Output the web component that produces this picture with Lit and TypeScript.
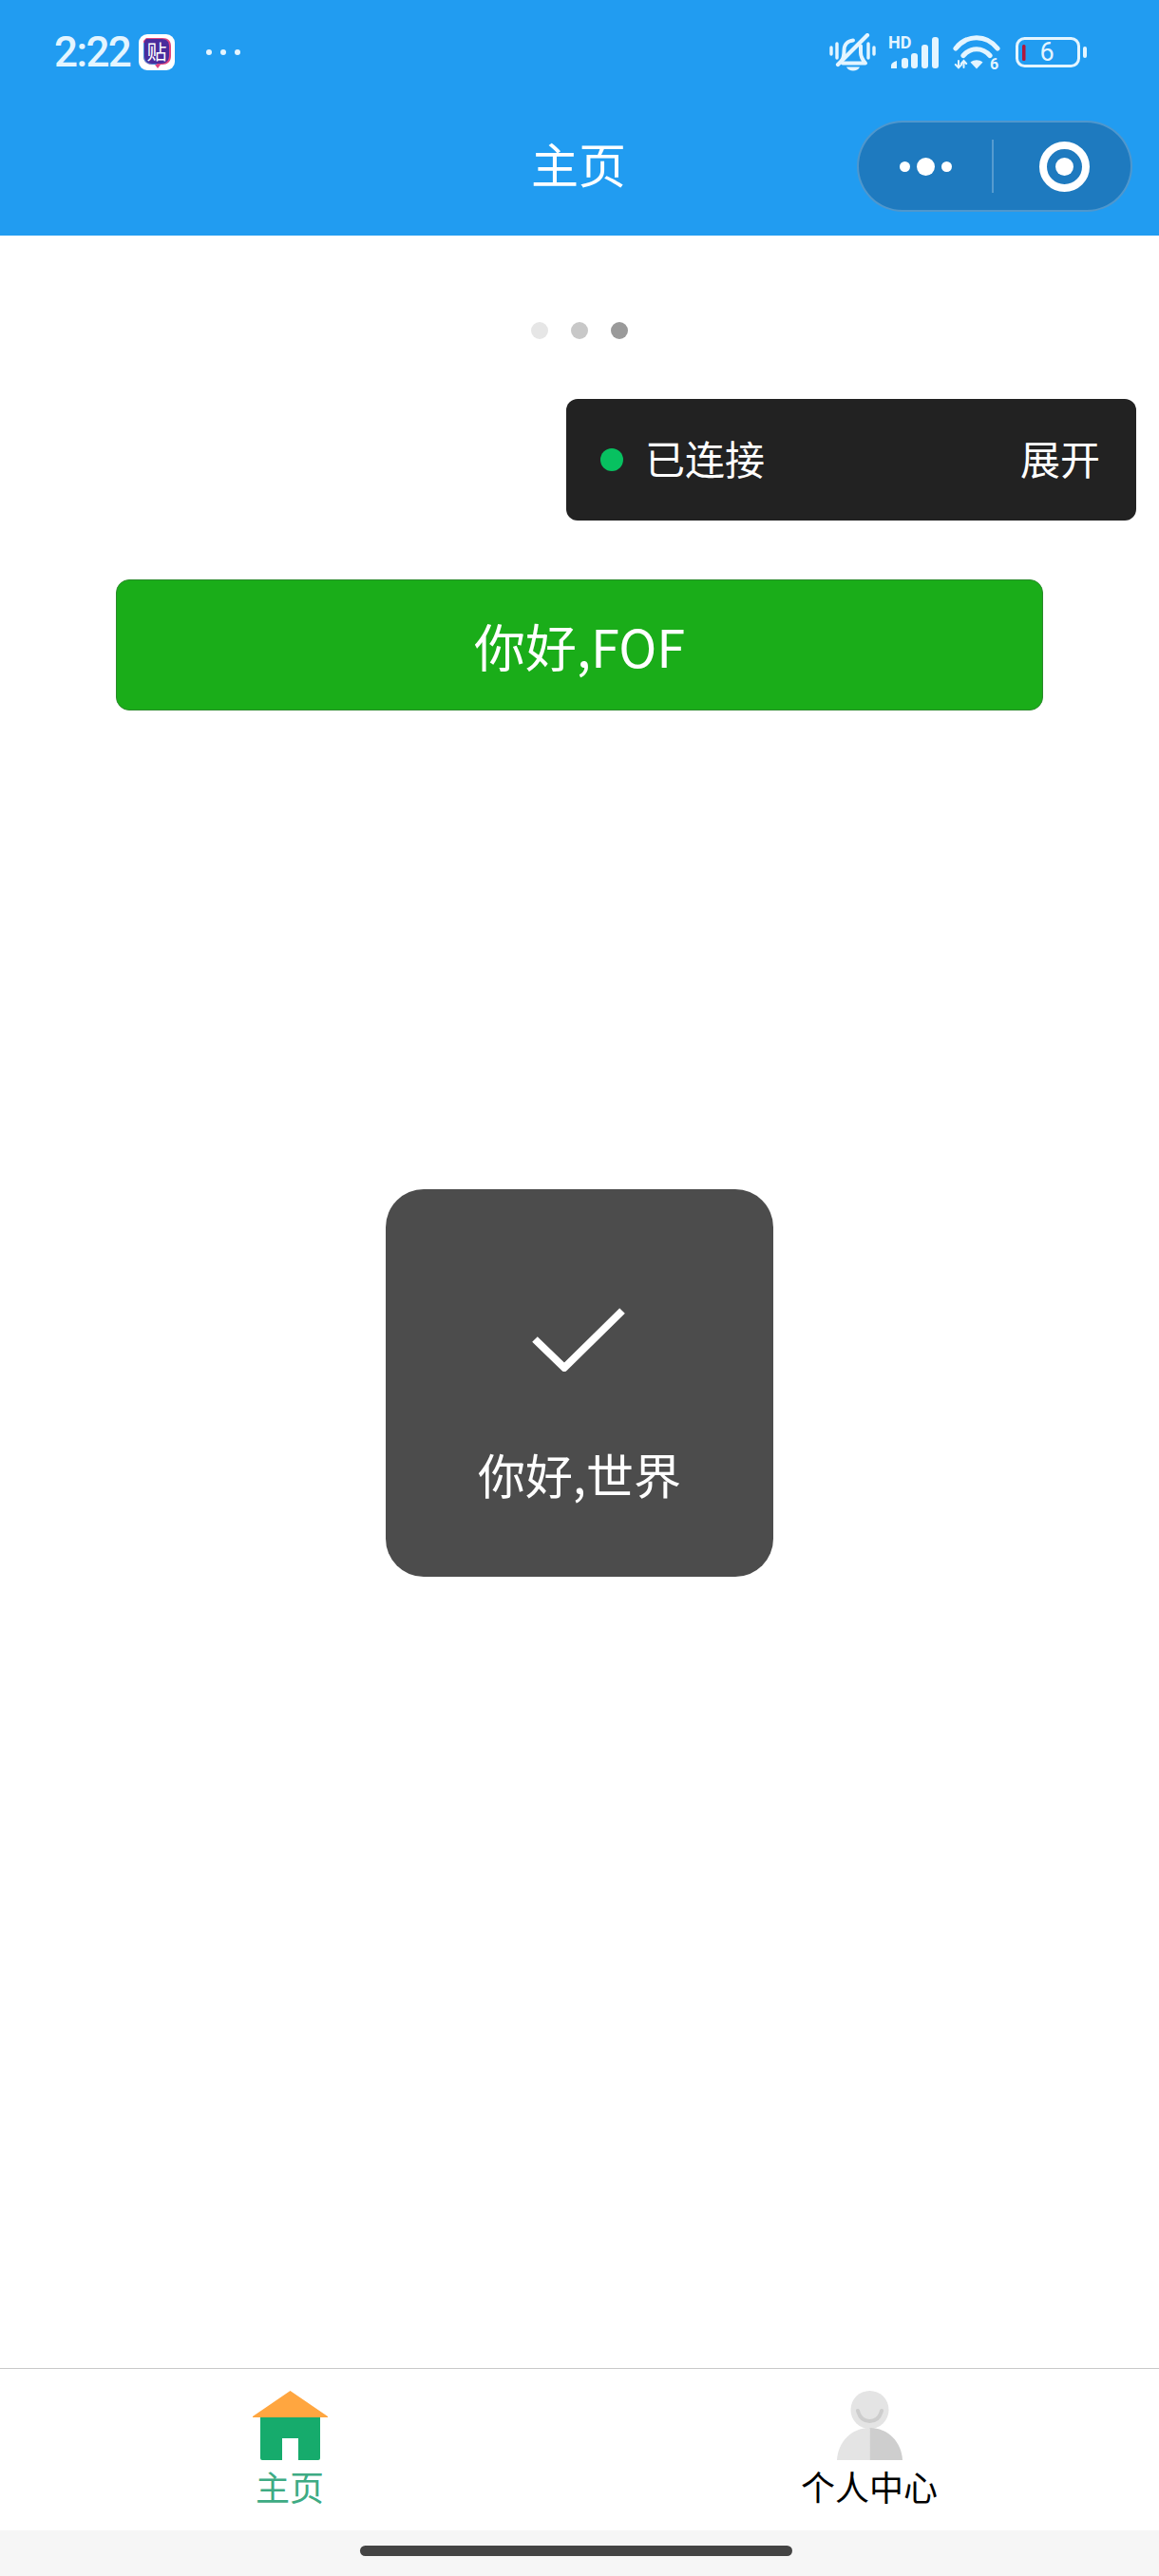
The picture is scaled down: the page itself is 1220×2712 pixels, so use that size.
import { LitElement, css, html, svg } from 'lit';
import { customElement } from 'lit/decorators.js';

const bellIcon = svg`<svg class="icon" width="49" height="40" viewBox="0 0 49 40" fill="none" stroke="currentColor" stroke-linecap="round" stroke-linejoin="round">
  <path stroke-width="3.4" d="M2 15v7M8 11v15M47 15v7M41 11v15"/>
  <path stroke-width="4" d="M13 29c2-3 2.500-6 2.500-11 0-6 4-10 9.500-10.500M33 13.500v7c0 4 2 7.500 5 11H14"/>
  <path stroke-width="4.200" d="M9 33 40 2"/>
  <path fill="currentColor" stroke="none" d="M18 35.500h14c-1 2.800-4 4-7 4s-6-1.200-7-4z"/>
</svg>`;

const signalIcon = svg`<svg class="icon" width="53" height="44" viewBox="0 -5 53 44" fill="currentColor">
  <text class="tiny" x="0" y="13" font-size="18">HD</text>
  <path d="M3 34v-3c0-2 2-4 6-5v8z"/>
  <rect x="14" y="23" width="7" height="11" rx="3"/>
  <rect x="24" y="18" width="7" height="16" rx="3"/>
  <rect x="35" y="9" width="7" height="25" rx="3"/>
  <rect x="46" y="1" width="7" height="33" rx="3"/>
</svg>`;

const wifiIcon = svg`<svg class="icon" width="50" height="46" viewBox="0 -5 50 46" fill="none" stroke="currentColor" stroke-linecap="round">
  <path stroke-width="5.200" d="M3 14C15 -1 35 -1 47 14"/>
  <path stroke-width="5.200" d="M11 21.500c8-9 20-9 28 0"/>
  <path fill="currentColor" stroke="none" d="M18.500 28.500c4-3 9-3 13 0L25 35.500z"/>
  <path stroke-width="2" d="M6 27v7M2.800 31 6 34.300 9.200 31M11.500 34v-7M8.800 30l2.700-3 2.700 3"/>
  <text class="tiny" x="39" y="35.500" font-size="16" fill="currentColor" stroke="none">6</text>
</svg>`;

const batteryIcon = svg`<svg class="icon" width="75" height="32" viewBox="0 0 75 32" fill="none">
  <rect x="1.500" y="1.500" width="65" height="29" rx="8" stroke="currentColor" stroke-width="3"/>
  <rect x="7" y="8" width="3.500" height="17" rx="1.500" fill="#b0173c"/>
  <rect x="71" y="10" width="4" height="12" rx="2" fill="currentColor"/>
  <text class="digit" x="33" y="25" font-size="27" text-anchor="middle" fill="currentColor">6</text>
</svg>`;

const appBadge = svg`<svg class="icon" width="38" height="38" viewBox="0 0 38 38">
  <rect width="38" height="38" rx="9" fill="#fff"/>
  <path fill="#e0457f" d="M8 4h17c6 0 9 3 9 9v10c0 6-4 9-9 9h-2l-3 4-3-4h-2C9 32 5 29 5 23V7z"/>
  <path fill="#3f8bd8" d="M5 9h14v23h-3C9 32 5 29 5 23z"/>
  <path fill="#4a2c9c" d="M9 5h15c6 0 8 3 8 8v9c0 6-3 9-9 9H14c-5 0-8-3-8-9V9c0-2 1-4 3-4z"/>
  <text class="badge-glyph" x="19" y="26" font-size="21" text-anchor="middle" fill="#fff">贴</text>
</svg>`;

const homeIcon = svg`<svg class="tab-icon" width="79" height="73" viewBox="0 0 79 73">
  <path fill="#16ab6c" d="M8 28h63v43a2 2 0 0 1-2 2H10a2 2 0 0 1-2-2z"/>
  <rect x="31" y="50" width="17" height="23" fill="#fff"/>
  <path fill="#ffa640" d="M39.500 0 79 27a.6.6 0 0 1 0 1H0a.6.6 0 0 1 0-1z"/>
</svg>`;

const personIcon = svg`<svg class="tab-icon" width="69" height="73" viewBox="0 0 69 73">
  <circle cx="34.500" cy="20" r="20" fill="#e4e4e4"/>
  <path fill="none" stroke="#cdcdcd" stroke-width="4" stroke-linecap="round" d="M22 21c2 8 7 11 12.500 11S45 29 47 21"/>
  <path fill="#e4e4e4" d="M34.500 39C15 39 1 54 0 73h34.500z"/>
  <path fill="#cecece" d="M34.500 39C54 39 68 54 69 73H34.500z"/>
</svg>`;

@customElement('app-root')
export class AppRoot extends LitElement {
  static styles = css`
    :host {
      display: flex;
      flex-direction: column;
      position: relative;
      height: 2712px;
      background: #fff;
      font-family: 'Noto Sans CJK SC', 'Noto Sans', sans-serif;
    }

    .header {
      background: #219cf1;
      color: #fff;
    }

    .status {
      align-items: center;
      color: #e4f5ff;
      display: flex;
      height: 102px;
      padding: 4px 76px 0 57px;
    }

    .icon {
      display: block;
      flex: none;
    }

    .tiny {
      font-family: Roboto, sans-serif;
      font-weight: 700;
    }

    .digit {
      font-family: Roboto, sans-serif;
      font-weight: 400;
    }

    .badge-glyph {
      font-family: 'Noto Sans CJK SC', sans-serif;
    }

    .time {
      font-family: Roboto, sans-serif;
      font-size: 44px;
      font-weight: 500;
      letter-spacing: -1.6px;
      line-height: 1;
      margin-right: 9px;
    }

    .more {
      display: flex;
      gap: 9px;
      margin-left: 33px;
    }

    .more i {
      background: #e4f5ff;
      border-radius: 50%;
      height: 6px;
      width: 6px;
    }

    .status-right {
      align-items: center;
      display: flex;
      margin-left: auto;
    }

    .status-right > :nth-child(2) {
      margin-left: 13px;
    }

    .status-right > :nth-child(3) {
      margin-left: 15px;
    }

    .status-right > :nth-child(4) {
      margin-left: 16px;
    }

    .nav {
      align-items: center;
      display: flex;
      height: 138px;
      justify-content: center;
      margin-bottom: 4px;
      position: relative;
    }

    .nav-title {
      font-size: 50px;
      line-height: 1;
      margin-bottom: 8px;
      margin-right: 2px;
    }

    .capsule {
      align-items: center;
      background: #1e7abf;
      border: 2px solid rgba(255, 255, 255, 0.22);
      border-radius: 48px;
      box-sizing: border-box;
      display: flex;
      height: 96px;
      position: absolute;
      right: 28px;
      top: 21px;
      width: 290px;
    }

    .capsule-side {
      align-items: center;
      display: flex;
      flex: 1;
      gap: 7px;
      justify-content: center;
    }

    .capsule-side.right {
      padding-left: 4px;
    }

    .capsule-side i {
      background: #fff;
      border-radius: 50%;
      height: 11px;
      width: 11px;
    }

    .capsule-side i.big {
      height: 19px;
      width: 19px;
    }

    .capsule-divider {
      background: rgba(255, 255, 255, 0.25);
      height: 56px;
      width: 2px;
    }

    .target {
      align-items: center;
      border: 8px solid #fff;
      border-radius: 50%;
      box-sizing: border-box;
      display: flex;
      height: 53px;
      justify-content: center;
      width: 53px;
    }

    .target::after {
      background: #fff;
      border-radius: 50%;
      content: '';
      height: 19px;
      width: 19px;
    }

    .content {
      display: flex;
      flex: 1;
      flex-direction: column;
    }

    .loading {
      display: flex;
      gap: 24px;
      justify-content: center;
      margin-top: 91px;
    }

    .loading i {
      border-radius: 50%;
      height: 18px;
      width: 18px;
    }

    .panel {
      align-items: center;
      align-self: flex-end;
      background: #222;
      border-radius: 12px;
      box-sizing: border-box;
      color: #fff;
      display: flex;
      font-size: 42px;
      height: 128px;
      line-height: 1;
      margin: 63px 24px 0 0;
      padding: 0 38px 0 36px;
      width: 600px;
    }

    .panel-dot {
      background: #07c160;
      border-radius: 50%;
      height: 24px;
      margin-right: 23px;
      width: 24px;
    }

    .panel-text {
      margin-bottom: 4px;
    }

    .panel-toggle {
      margin-bottom: 4px;
      margin-left: auto;
    }

    .greet {
      align-items: center;
      background: #1aad19;
      border: 1px solid #2a8a2a;
      border-radius: 14px;
      box-sizing: border-box;
      color: #fff;
      display: flex;
      font-size: 54px;
      height: 138px;
      justify-content: center;
      margin: 62px 122px 0;
    }

    .toast {
      align-items: center;
      background: #4c4c4c;
      border-radius: 40px;
      color: #fff;
      display: flex;
      flex-direction: column;
      font-size: 50px;
      height: 408px;
      left: 406px;
      position: absolute;
      top: 1252px;
      width: 408px;
    }

    .toast svg {
      display: block;
      margin-top: 124px;
    }

    .toast span {
      line-height: 72px;
      margin-top: 71px;
    }

    .tabbar {
      border-top: 1px solid #c8c8c8;
      display: flex;
      height: 170px;
    }

    .tab {
      align-items: center;
      display: flex;
      flex: 1;
      flex-direction: column;
      font-size: 36px;
      line-height: 52px;
      padding-top: 23px;
    }

    .tab.active {
      color: #3eab84;
    }

    .tab-icon {
      display: block;
      margin-bottom: 1px;
    }

    .home-bar {
      align-items: center;
      background: #f6f6f6;
      display: flex;
      height: 48px;
      justify-content: center;
    }

    .home-bar i {
      background: #444;
      border-radius: 6px;
      height: 11px;
      margin: -5px 7px 0 0;
      width: 455px;
    }
  `;

  render() {
    return html`
      <div class="header">
        <div class="status">
          <span class="time">2:22</span>
          ${appBadge}
          <div class="more"><i></i><i></i><i></i></div>
          <div class="status-right">
            ${bellIcon} ${signalIcon} ${wifiIcon} ${batteryIcon}
          </div>
        </div>
        <div class="nav">
          <span class="nav-title">主页</span>
          <div class="capsule">
            <div class="capsule-side">
              <i></i><i class="big"></i><i></i>
            </div>
            <div class="capsule-divider"></div>
            <div class="capsule-side right"><div class="target"></div></div>
          </div>
        </div>
      </div>

      <div class="content">
        <div class="loading">
          <i style="background: #e6e6e6"></i>
          <i style="background: #c8c8c8"></i>
          <i style="background: #9a9a9a"></i>
        </div>
        <div class="panel">
          <span class="panel-dot"></span>
          <span class="panel-text">已连接</span>
          <span class="panel-toggle">展开</span>
        </div>
        <div class="greet">你好,FOF</div>
      </div>

      <div class="tabbar">
        <div class="tab active">${homeIcon}<span>主页</span></div>
        <div class="tab">${personIcon}<span>个人中心</span></div>
      </div>
      <div class="home-bar"><i></i></div>

      <div class="toast">
        <svg width="100" height="68" viewBox="0 0 100 68" fill="none">
          <path stroke="#fff" stroke-width="8" stroke-linejoin="round" d="M3 34l31 30 61-60"/>
        </svg>
        <span>你好,世界</span>
      </div>
    `;
  }
}
